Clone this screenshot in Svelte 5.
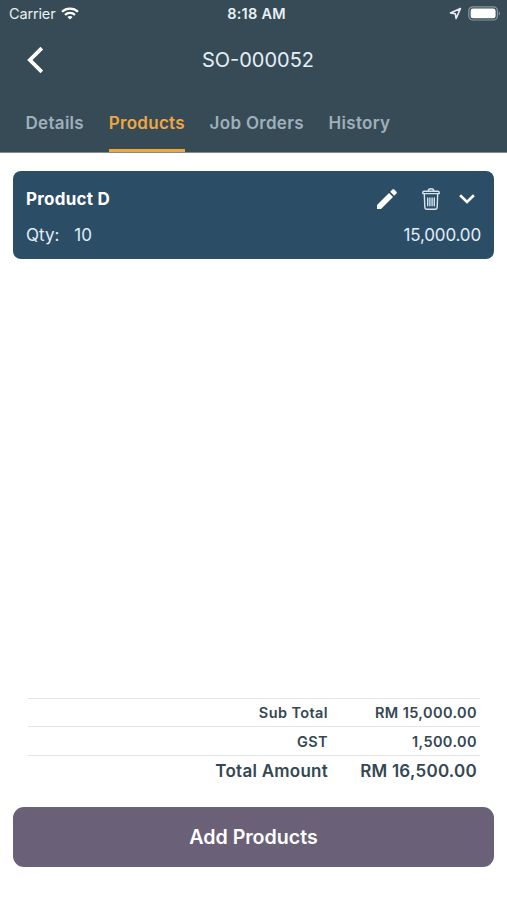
<script>
  const tabs = ['Details', 'Products', 'Job Orders', 'History'];
  let activeTab = $state('Products');

  const product = { name: 'Product D', qty: 10, amount: '15,000.00' };

  const totals = [
    { label: 'Sub Total', value: 'RM 15,000.00' },
    { label: 'GST', value: '1,500.00' },
    { label: 'Total Amount', value: 'RM 16,500.00', grand: true }
  ];
</script>

<div class="screen">
  <header>
    <div class="status-bar">
      <div class="carrier">
        <span>Carrier</span>
        <svg width="18" height="13" viewBox="0 0 18 13" fill="none" stroke="#fff" stroke-width="2.2">
          <path d="M1 4.7C5.4.5 12.6.5 17 4.7" />
          <path d="M4 7.9c2.8-2.6 7.2-2.6 10 0" />
          <path d="M9 12.6 6.4 10c1.4-1.3 3.8-1.3 5.2 0z" fill="#fff" stroke="none" />
        </svg>
      </div>
      <span class="time">8:18 AM</span>
      <div class="indicators">
        <svg width="13" height="13" viewBox="0 0 13 13" fill="none" stroke="#e6eef3" stroke-width="1.6" stroke-linejoin="round">
          <path d="M11.4 1.6 1.5 5.9l4.8.8.8 4.8z" />
        </svg>
        <svg width="33" height="15" viewBox="0 0 33 15">
          <rect x="0.8" y="0.8" width="28.6" height="13.2" rx="4" fill="none" stroke="#8b989f" stroke-width="1.2" />
          <rect x="2.6" y="2.5" width="25" height="9.8" rx="2.4" fill="#fff" />
          <path d="M30.8 5.2c1.6.7 1.6 3.7 0 4.4z" fill="#8b989f" />
        </svg>
      </div>
    </div>

    <div class="nav-bar">
      <button class="back" aria-label="Back">
        <svg width="18" height="28" viewBox="0 0 18 28" fill="none" stroke="#fff" stroke-width="3.8">
          <path d="M14.8 2.2 2.9 14l11.9 11.8" />
        </svg>
      </button>
      <h1>SO-000052</h1>
    </div>

    <nav>
      {#each tabs as tab}
        <button class="tab" class:active={tab === activeTab} onclick={() => (activeTab = tab)}>{tab}</button>
      {/each}
    </nav>
  </header>

  <main>
    <section class="card">
      <div class="card-row">
        <span class="name">{product.name}</span>
        <div class="actions">
          <svg class="edit" width="20" height="20" viewBox="0 0 20 20" fill="#fff">
            <path d="M0 16v4h4L16 8l-4-4z" />
            <path d="M13.2 2.8l4 4 2.2-2.2c.6-.6.6-1.3 0-1.9L17.3.6c-.6-.6-1.3-.6-1.9 0z" />
          </svg>
          <svg class="delete" width="18" height="22" viewBox="0 0 18 22" fill="none" stroke="#d5e3ed" stroke-width="1.4" stroke-linecap="round" stroke-linejoin="round">
            <path d="M6.2 3.2C6.2 1.6 7 .8 9 .8s2.8.8 2.8 2.4" />
            <path d="M2.2 3.3h13.6q1.4 0 1.4 1.3v1H.8v-1q0-1.3 1.4-1.3z" />
            <path d="M2.3 5.8l.5 13.2q.1 2.2 2.2 2.2h8q2.1 0 2.2-2.2l.5-13.2" />
            <path d="M5.7 10v7.8M7.9 10v7.8M10.1 10v7.8M12.3 10v7.8" />
          </svg>
          <svg class="expand" width="16" height="10" viewBox="0 0 16 10" fill="none" stroke="#fff" stroke-width="2.6">
            <path d="M1.1 1.3 8 8l6.9-6.7" />
          </svg>
        </div>
      </div>
      <div class="card-row">
        <div class="qty"><span>Qty:</span><span>{product.qty}</span></div>
        <span class="amount">{product.amount}</span>
      </div>
    </section>
  </main>

  <footer>
    <div class="totals">
      {#each totals as row}
        <div class="total-row" class:grand={row.grand}>
          <span>{row.label}</span>
          <span class="value">{row.value}</span>
        </div>
      {/each}
    </div>
    <button class="add">Add Products</button>
  </footer>
</div>

<style>
  .screen {
    width: 507px;
    height: 900px;
    display: flex;
    flex-direction: column;
    background: #fff;
    font-family: Inter, 'Liberation Sans', sans-serif;
    color: #344752;
    overflow: hidden;
    white-space: nowrap;
  }

  button {
    padding: 0;
    border: none;
    background: none;
    font: inherit;
    color: inherit;
    cursor: pointer;
  }

  svg {
    display: block;
    flex: none;
  }

  header {
    height: 152px;
    background: #374b56;
    border-bottom: 1px solid #7f8b92;
    box-sizing: content-box;
  }

  .status-bar {
    display: grid;
    grid-template-columns: 1fr auto 1fr;
    align-items: center;
    height: 27px;
    padding: 0 6px 0 9px;
    color: #e9f1f5;
    font-size: 14.5px;
  }

  .carrier,
  .indicators {
    display: flex;
    align-items: center;
    gap: 6px;
  }

  .carrier {
    letter-spacing: -0.15px;
  }

  .indicators {
    justify-content: flex-end;
  }

  .time {
    padding-left: 3px;
    font-weight: 600;
    letter-spacing: 0.25px;
  }

  .nav-bar {
    display: grid;
    grid-template-columns: 89px 1fr 80px;
    align-items: center;
    height: 66px;
  }

  .back {
    padding-left: 27px;
  }

  h1 {
    margin: 0;
    text-align: center;
    font-size: 20px;
    font-weight: 400;
    color: #e4eff6;
  }

  nav {
    display: flex;
    gap: 24.7px;
    height: 59px;
    padding-left: 25.5px;
  }

  .tab {
    padding-top: 4px;
    border-bottom: 3px solid transparent;
    font-size: 17px;
    font-weight: 600;
    letter-spacing: 0.3px;
    color: #9fb0ba;
  }

  .tab.active {
    color: #f0a73f;
    border-bottom-color: #f3a536;
  }

  main {
    flex: 1;
    padding: 18px 13px 0;
  }

  .card {
    box-sizing: border-box;
    height: 88px;
    padding: 10px 13px 6px;
    border-radius: 8px;
    background: #2c4d66;
    color: #e1eef8;
    font-size: 17px;
  }

  .card-row {
    display: flex;
    align-items: center;
    justify-content: space-between;
    height: 36px;
  }

  .name {
    font-weight: 700;
    letter-spacing: 0.25px;
    color: #fff;
  }

  .actions {
    display: flex;
    align-items: center;
    padding-right: 6px;
  }

  .delete {
    margin: 0 19px 0 25px;
  }

  .qty {
    display: flex;
    gap: 15px;
  }

  .amount {
    letter-spacing: -0.15px;
  }

  footer {
    padding: 0 13px 33px;
  }

  .totals {
    margin: 0 14px 20.5px 15px;
  }

  .total-row {
    display: flex;
    align-items: center;
    justify-content: flex-end;
    box-sizing: border-box;
    height: 28.5px;
    padding: 1px 3px 0 0;
    border-top: 1px solid #e2e4e5;
    font-size: 14.5px;
    font-weight: 600;
    letter-spacing: 0.4px;
  }

  .total-row.grand {
    height: 32px;
    padding-top: 0;
    font-size: 17px;
    letter-spacing: 0.25px;
  }

  .value {
    width: 149px;
    text-align: right;
  }

  .add {
    display: block;
    width: 100%;
    height: 60px;
    border-radius: 11px;
    background: #6a6078;
    color: #fff;
    font-size: 19.6px;
    font-weight: 600;
  }
</style>
